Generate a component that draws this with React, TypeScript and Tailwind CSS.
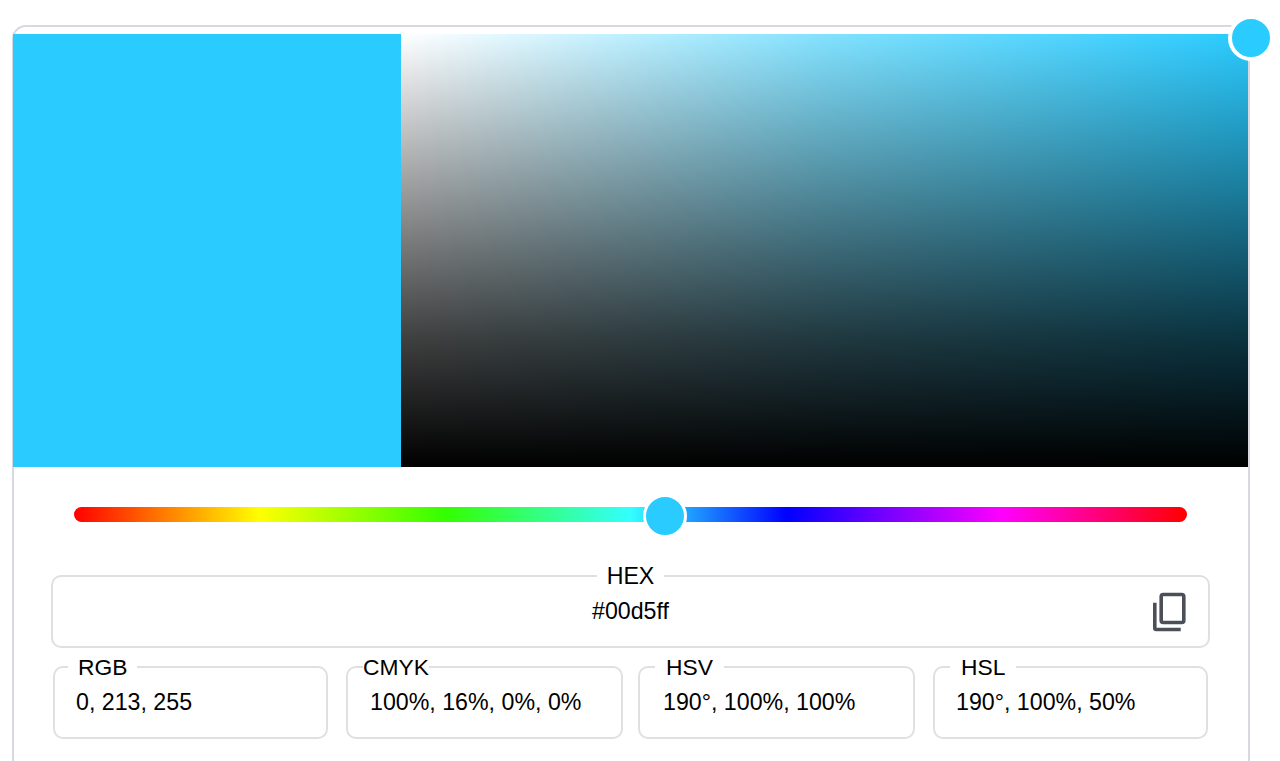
import React from "react";

const font = { fontFamily: '"Liberation Sans", Arial, sans-serif' };

function Field({ label, value, notch, valuePad, className }: { label: string; value: string; notch: string; valuePad: string; className: string }) {
  return (
    <fieldset className={`h-[82px] rounded-[10px] border-2 border-[#e0e0e0] ${className}`}>
      <legend className={`text-[22.8px] leading-[20px] text-black ${notch}`}>{label}</legend>
      <div className={`text-[23.2px] leading-[26px] text-black whitespace-nowrap pt-[12px] ${valuePad}`}>{value}</div>
    </fieldset>
  );
}

export default function App() {
  return (
    <div className="h-[761px] overflow-hidden bg-white pl-3 pt-[25px]" style={font}>
      <div className="relative h-[800px] w-[1238px] rounded-t-[14px] border-2 border-b-0 border-[#d8d8e2] pt-[7px]">
        <div className="-ml-px flex h-[433px]">
          <div className="h-full w-[388px] bg-[#2acbff]" />
          <div className="relative h-full flex-1 bg-[linear-gradient(to_right,#ffffff,#82e2ff_50%,#2acbff)]">
            <div className="absolute inset-0 bg-[linear-gradient(to_bottom,rgba(0,0,0,0),rgba(0,0,0,0.54)_50%,rgba(0,0,0,0.75)_70%,#000000)]" />
          </div>
        </div>

        <div className="absolute -right-[26px] -top-[12px] h-[46px] w-[46px] rounded-full border-[4px] border-white bg-[#2acbff]" />

        <div className="relative ml-[60px] mt-10 h-[15px] w-[1113px] rounded-full bg-[linear-gradient(to_right,#ff0000_0%,#ffff00_16.67%,#33ff00_33.33%,#33ffff_50%,#0000ff_64%,#ff00ff_83.33%,#ff0000_100%)]">
          <div className="absolute left-[569px] -top-[13px] h-[44px] w-[44px] rounded-full border-[3px] border-white bg-[#2acbff]" />
        </div>

        <fieldset className="relative ml-[37px] mt-[44px] h-[82px] w-[1159px] rounded-[10px] border-2 border-[#e0e0e0]">
          <legend className="mx-auto px-[10px] text-[23.2px] leading-[20px] text-black">HEX</legend>
          <div className="pt-[12px] text-center text-[23.2px] leading-[26px] text-black">#00d5ff</div>
          <svg viewBox="0 0 34 40" fill="none" stroke="#4b5058" strokeWidth="3.6" className="absolute right-[22px] top-[6px] h-[40px] w-[34px]">
            <rect x="9.200" y="2.500" width="22.600" height="28" rx="2" />
            <path d="M2.800 10.700V36a1.500 1.500 0 0 0 1.500 1.500H28.700" />
          </svg>
        </fieldset>

        <div className="ml-[39px] mt-[9px] flex">
          <Field label="RGB" value="0, 213, 255" notch="ml-[13px] px-[10px]" valuePad="pl-[21px]" className="w-[275px]" />
          <Field label="CMYK" value="100%, 16%, 0%, 0%" notch="ml-[15px] px-0" valuePad="pl-[22px]" className="ml-[18px] w-[277px]" />
          <Field label="HSV" value="190°, 100%, 100%" notch="ml-[15px] px-[11px]" valuePad="pl-[23px]" className="ml-[15px] w-[277px]" />
          <Field label="HSL" value="190°, 100%, 50%" notch="ml-[15px] px-[11px]" valuePad="pl-[21px]" className="ml-[18px] w-[275px]" />
        </div>
      </div>
    </div>
  );
}
